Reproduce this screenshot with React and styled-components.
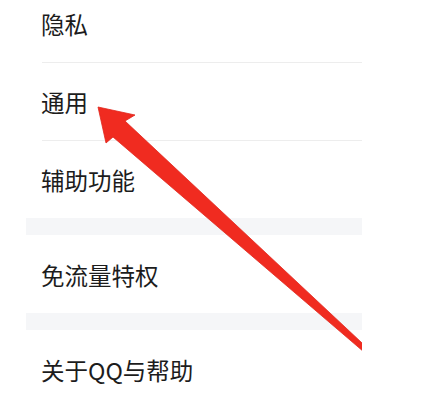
import styled, { createGlobalStyle } from 'styled-components';

const GlobalStyle = createGlobalStyle`
    html, body {
        margin: 0;
        padding: 0;
        background: #ffffff;
    }
    body {
        font-family: "Noto Sans CJK SC", "Noto Sans", sans-serif;
    }
`;

const groups = [
    ['隐私', '通用', '辅助功能'],
    ['免流量特权'],
    ['关于QQ与帮助'],
];

function App() {
    return (
        <>
            <GlobalStyle />
            <Page>
                <Panel>
                    {groups.map((items, gi) => (
                        <Group key={gi}>
                            {items.map((label, i) => (
                                <Row key={label} $divider={i < items.length - 1}>
                                    <Label>{label}</Label>
                                </Row>
                            ))}
                        </Group>
                    ))}
                </Panel>
                {/* annotation arrow pointing at 通用 */}
                <Arrow viewBox='0 0 362 405' aria-hidden='true'>
                    <polygon
                        points='98,107 135,115 125,121 440,416 441,418 113,137 106,143'
                        fill='#f02b20'
                        stroke='#e0261c'
                        strokeWidth='0.8'
                        strokeLinejoin='round'
                    />
                </Arrow>
            </Page>
        </>
    );
}

const Page = styled.div`
    position: relative;
    width: 431px;
    height: 405px;
    overflow: hidden;
    background: #ffffff;
`;

const Panel = styled.div`
    display: flex;
    flex-direction: column;
    gap: 17px;
    width: 336px;
    margin-left: 26px;
    margin-top: -16px;
    background: #f5f6f8;
`;

const Group = styled.div`
    display: flex;
    flex-direction: column;
    background: #ffffff;
`;

const Row = styled.div`
    position: relative;
    display: flex;
    align-items: center;
    height: 78px;
    padding-left: 15px;

    &::after {
        content: '';
        display: ${p => (p.$divider ? 'block' : 'none')};
        position: absolute;
        left: 16px;
        right: 0;
        bottom: -1px;
        height: 1px;
        background: #ededed;
    }
`;

const Label = styled.span`
    font-size: 23.5px;
    line-height: 1;
    color: #1c1c1c;
    padding-top: 3px;
`;

const Arrow = styled.svg`
    position: absolute;
    left: 0;
    top: 0;
    width: 362px;
    height: 405px;
    pointer-events: none;
`;

export default App;
